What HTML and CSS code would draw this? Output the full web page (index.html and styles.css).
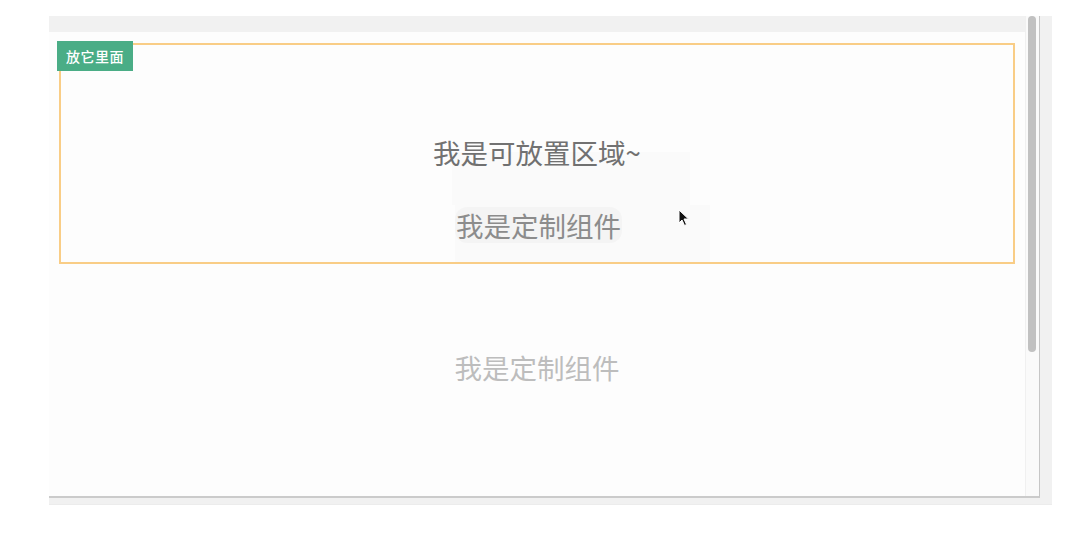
FILE: index.html
```html
<!DOCTYPE html>
<html lang="zh-CN">
<head>
<meta charset="utf-8">
<title>drop</title>
<link rel="stylesheet" href="styles.css">
</head>
<body>
<div class="window">
  <div class="frame">
    <div class="viewport">
      <div class="dropzone">
        <div class="tag">放它里面</div>
        <div class="zone-text">我是可放置区域~</div>
      </div>
      <div class="component">我是定制组件</div>
    </div>
    <div class="track"><div class="thumb"></div></div>
  </div>
  <div class="ghost-wrap">
    <div class="ghost-top"></div>
    <div class="ghost"><span class="ghost-text">我是定制组件</span></div>
  </div>
  <svg class="cursor" width="12" height="18" viewBox="0 0 12 18"><path d="M1 1 L1 14 L4 11 L6.5 16.5 L8.5 15.5 L6 10 L10.5 10 Z" fill="#111" stroke="#fff" stroke-width="1"/></svg>
</div>
</body>
</html>
```

FILE: styles.css
```css
html, body {
  margin: 0;
  padding: 0;
  background: #ffffff;
}
body {
  font-family: "Noto Sans CJK SC", "Noto Sans", sans-serif;
}
.window {
  position: relative;
  width: 1003px;
  height: 489px;
  margin: 16px 0 0 49px;
  background: #f1f1f1;
  border-bottom: 1px solid #ececec;
  box-sizing: border-box;
}
.frame {
  display: flex;
  width: 991px;
  height: 482px;
  border-right: 1px solid #c6c6c6;
  border-bottom: 2px solid #cbcbcb;
  box-sizing: border-box;
}
.viewport {
  flex: 1;
  margin-top: 16px;
  background: #fdfdfd;
  padding: 11px 10px 0;
  display: flex;
  flex-direction: column;
}
.dropzone {
  position: relative;
  height: 221px;
  border: 2px solid #f9cd86;
  box-sizing: border-box;
  display: flex;
  align-items: center;
  justify-content: center;
}
.tag {
  position: absolute;
  top: -4px;
  left: -4px;
  width: 76px;
  height: 30px;
  background: #4aad86;
  color: #ffffff;
  font-size: 14px;
  font-weight: 500;
  display: flex;
  align-items: center;
  justify-content: center;
  letter-spacing: 0.5px;
}
.zone-text {
  font-size: 27.5px;
  color: #727272;
  margin-top: -4px;
}
.component {
  height: 206px;
  display: flex;
  align-items: center;
  justify-content: center;
  font-size: 27.5px;
  color: #bdbdbd;
}
.track {
  width: 14px;
  background: #fafafa;
  border-left: 1px solid #f0f0f0;
  box-sizing: border-box;
  padding-left: 2px;
}
.thumb {
  width: 8px;
  height: 336px;
  background: #c1c1c1;
  border-radius: 4px;
}
.ghost-wrap {
  position: absolute;
  left: 403px;
  top: 136px;
}
.ghost-top {
  width: 238px;
  height: 53px;
  background: rgba(0, 0, 0, 0.012);
}
.ghost {
  width: 255px;
  height: 57px;
  margin-left: 3px;
  background: rgba(0, 0, 0, 0.012);
  padding-top: 2px;
  box-sizing: border-box;
}
.ghost-text {
  display: inline-block;
  font-size: 27.5px;
  color: #8c8c8c;
  background: rgba(0, 0, 0, 0.025);
  border-radius: 12px;
  padding: 0 1px;
  line-height: 36px;
}
.cursor {
  position: absolute;
  left: 629px;
  top: 193px;
}
```
